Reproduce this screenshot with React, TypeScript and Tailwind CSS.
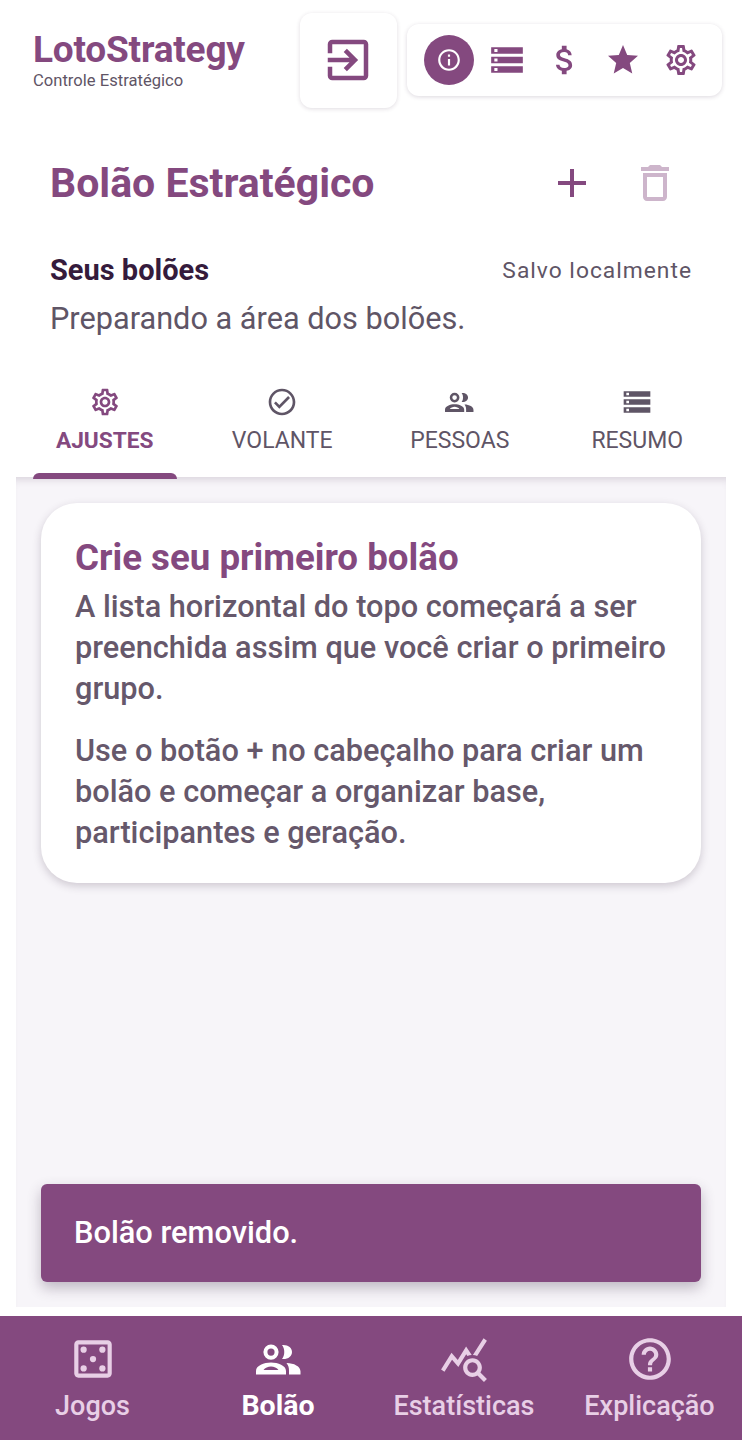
import React from "react";
import {
  MdOutlineExitToApp,
  MdInfoOutline,
  MdStorage,
  MdAttachMoney,
  MdStar,
  MdOutlineSettings,
  MdAdd,
  MdOutlineDelete,
  MdOutlineCheckCircle,
  MdOutlineCasino,
  MdOutlineQueryStats,
  MdHelpOutline,
} from "react-icons/md";

const PeopleIcon = ({ size }: { size: number }) => (
  <svg width={size * 0.9} height={size} viewBox="0 -10.5 45 50" fill="currentColor" fillRule="evenodd">
    <path d="M15 0a7.6 7.6 0 1 1 0 15.2a7.6 7.6 0 1 1 0-15.2zM15 4a3.6 3.6 0 1 0 0 7.2a3.6 3.6 0 1 0 0-7.2z" />
    <path d="M26 0.500C32 0 36 3 36 7.500S32 15 26 14.500C29 11 29 4 26 0.500z" />
    <path d="M0 30v-3.500c0-5.500 8-8.500 15-8.500s15 3 15 8.500v3.500zM7.500 25.500h15c-1.500-2-4.500-3.500-7.500-3.500s-6 1.500-7.500 3.500z" />
    <path d="M30.500 18.500C38 18.500 44.500 22 44.500 27V30H33V26.500C33 23.500 32.500 21 30.500 18.500z" />
  </svg>
);

const tabs = [
  { label: "AJUSTES", Icon: MdOutlineSettings, active: true },
  { label: "VOLANTE", Icon: MdOutlineCheckCircle, active: false },
  { label: "PESSOAS", Icon: PeopleIcon, active: false },
  { label: "RESUMO", Icon: MdStorage, active: false },
];

const navItems = [
  { label: "Jogos", Icon: MdOutlineCasino, active: false },
  { label: "Bolão", Icon: PeopleIcon, active: true },
  { label: "Estatísticas", Icon: MdOutlineQueryStats, active: false },
  { label: "Explicação", Icon: MdHelpOutline, active: false },
];

const App = () => {
  return (
    <div className="flex flex-col w-[742px] h-[1440px] overflow-hidden bg-white font-['Roboto',sans-serif]">
      <header className="flex flex-row items-center h-[120px] shrink-0">
        <div className="flex flex-col w-[300px] pl-[33px]">
          <p className="text-[37px] leading-[42px] font-bold text-[#84497f] tracking-[-0.2px]">LotoStrategy</p>
          <p className="text-[16.6px] leading-[20px] text-[#5f5566]">Controle Estratégico</p>
        </div>
        <div className="flex items-center justify-center w-[97px] h-[95px] rounded-[12px] bg-white shadow-[0_1px_4px_rgba(60,40,70,0.16)]">
          <MdOutlineExitToApp className="text-[#84497f] -ml-[2px]" size={54} />
        </div>
        <div className="flex flex-row items-center ml-[10px] w-[315px] h-[72px] pl-[17px] rounded-[12px] bg-white shadow-[0_1px_4px_rgba(60,40,70,0.18)] text-[#84497f]">
          <div className="flex items-center justify-center w-[50px] h-[50px] rounded-full bg-[#84497f] text-white">
            <MdInfoOutline size={26} />
          </div>
          <div className="flex items-center justify-center w-[58px] ml-[4px]"><MdStorage size={38} /></div>
          <div className="flex items-center justify-center w-[58px]"><MdAttachMoney size={38} /></div>
          <div className="flex items-center justify-center w-[58px]"><MdStar size={36} /></div>
          <div className="flex items-center justify-center w-[58px]"><MdOutlineSettings size={36} /></div>
        </div>
      </header>

      <section className="flex flex-row items-center justify-between h-[96px] shrink-0 pl-[50px] pr-[63px] mt-[15px]">
        <h1 className="text-[41px] leading-[48px] font-bold text-[#84497f]">Bolão Estratégico</h1>
        <div className="flex flex-row items-center gap-[35px]">
          <MdAdd size={48} className="text-[#84497f]" />
          <MdOutlineDelete size={48} className="text-[#84497f] opacity-40" />
        </div>
      </section>

      <section className="flex flex-col px-[50px] shrink-0 mt-[22px]">
        <div className="flex flex-row items-center justify-between h-[36px]">
          <p className="text-[29px] font-bold text-[#351b3c]">Seus bolões</p>
          <p className="text-[22.8px] text-[#5f5566] tracking-[1px]">Salvo localmente</p>
        </div>
        <p className="text-[30.7px] leading-[44px] mt-[8px] text-[#5f5566]">Preparando a área dos bolões.</p>
      </section>

      <div className="flex flex-col flex-1 min-h-0 mx-[16px] mt-[37px] mb-[9px]">
        <nav className="flex flex-row h-[99px] shrink-0">
          {tabs.map(({ label, Icon, active }) => (
            <div
              key={label}
              className={
                "relative flex flex-col flex-1 items-center pt-[8px] " + (active ? "text-[#84497f]" : "text-[#5f5566]")
              }
            >
              <Icon size={32} />
              <p className={"leading-[28px] mt-[9px] " + (active ? "text-[22.7px] font-bold" : "text-[23px] font-normal")}>{label}</p>
              {active && <span className="absolute -bottom-[2px] left-[17px] right-[17px] h-[6px] rounded-t-[6px] bg-[#84497f]" />}
            </div>
          ))}
        </nav>
        <main className="flex flex-col justify-between flex-1 min-h-0 bg-[#f7f5f9] shadow-[inset_0_8px_8px_-6px_rgba(60,40,70,0.18)] pt-[26px] pb-[25px] px-[25px]">
          <div className="flex flex-col h-[380px] rounded-[36px] bg-white pt-[30px] px-[34px] shadow-[0_3px_8px_rgba(60,40,70,0.22)]">
            <h2 className="text-[36.7px] leading-[50px] font-bold text-[#84497f]">Crie seu primeiro bolão</h2>
            <p className="text-[30.7px] leading-[41px] mt-[3px] font-medium text-[#66586b]">
              A lista horizontal do topo começará a ser preenchida assim que você criar o primeiro grupo.
            </p>
            <p className="text-[30.7px] leading-[41px] font-medium text-[#66586b] mt-[21px]">
              Use o botão + no cabeçalho para criar um bolão e começar a organizar base, participantes e geração.
            </p>
          </div>
          <div className="flex items-center h-[98px] rounded-[6px] bg-[#84497f] px-[33px] shadow-[0_6px_14px_rgba(60,40,70,0.3)]">
            <p className="text-[30.8px] font-medium text-white">Bolão removido.</p>
          </div>
        </main>
      </div>

      <footer className="grid grid-cols-[185px_186px_186px_185px] h-[124px] shrink-0 bg-[#84497f]">
        {navItems.map(({ label, Icon, active }) => (
          <div
            key={label}
            className={"flex flex-col items-center pt-[18px] " + (active ? "text-white" : "text-[#e8cfe6]")}
          >
            <Icon size={50} />
            <p className={"leading-[34px] mt-[5px] " + (active ? "text-[28.5px] font-bold" : "text-[27px] font-medium")}>{label}</p>
          </div>
        ))}
      </footer>
    </div>
  );
};

export default App;
